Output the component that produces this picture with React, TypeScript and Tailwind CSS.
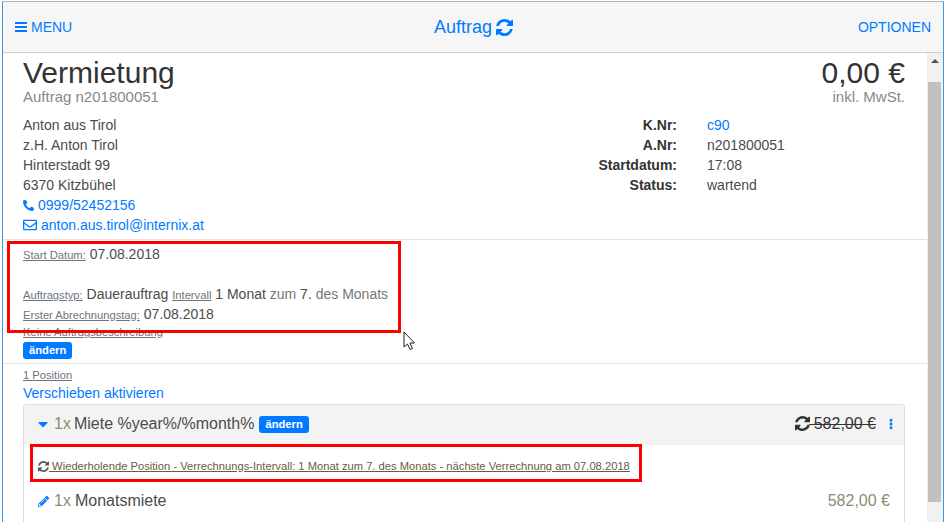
import { FaCaretDown, FaEllipsisV, FaPencilAlt, FaPhoneAlt, FaRegEnvelope } from 'react-icons/fa'

const infoRows = [
  { label: 'K.Nr:', value: 'c90', link: true },
  { label: 'A.Nr:', value: 'n201800051' },
  { label: 'Startdatum:', value: '17:08' },
  { label: 'Status:', value: 'wartend' },
]

function Small({ children }: { children: React.ReactNode }) {
  return <span className="text-[11.2px] text-[#6c757d] underline">{children}</span>
}

function Badge() {
  return (
    <span className="inline-block h-[17px] px-[6px] rounded-[3px] bg-[#007bff] text-white text-[11.2px] leading-[17px] font-bold">
      ändern
    </span>
  )
}

function Refresh({ size, className }: { size: number; className?: string }) {
  return (
    <svg width={size} height={size} viewBox="128 128 1536 1536" fill="currentColor" className={className}>
      <path d="M1639 1056q0 5-1 7-64 268-268 434.500t-478 166.500q-146 0-282.500-55t-243.500-157l-129 129q-19 19-45 19t-45-19-19-45v-448q0-26 19-45t45-19h448q26 0 45 19t19 45-19 45l-137 137q71 66 161 102t187 36q134 0 250-65t186-179q11-17 53-117 8-23 30-23h192q13 0 22.500 9.500t9.500 22.500zm25-800v448q0 26-19 45t-45 19h-448q-26 0-45-19t-19-45 19-45l138-138q-148-137-349-137-134 0-250 65t-186 179q-11 17-53 117-8 23-30 23h-199q-13 0-22.500-9.500t-9.500-22.500v-7q65-268 270-434.500t480-166.500q146 0 284 55.500t245 156.500l130-129q19-19 45-19t45 19 19 45z" />
    </svg>
  )
}

export default function App() {
  return (
    <div className="relative w-[944px] h-[522px] overflow-hidden bg-white pl-[2px] pt-[1px] text-[14px] leading-[20px] text-[#4c4c4c] font-['Liberation_Sans',Arial,sans-serif]">
      <div className="w-full h-full border-x-[1px] border-t-[1px] border-x-[#3b99e8] border-t-[#b5b5b5] flex flex-col">
        <div className="h-[51px] shrink-0 bg-[#f6f6f6] border-b border-[#cfcfcf] flex items-center justify-between px-[12px] text-[#007bff]">
          <div className="flex items-center gap-[4px]">
            <svg width="12" height="10" viewBox="0 0 12 10" fill="currentColor">
              <rect width="12" height="2" />
              <rect y="4" width="12" height="2" />
              <rect y="8" width="12" height="2" />
            </svg>
            MENU
          </div>
          <div className="flex items-center gap-[4px] text-[18px] ml-[17px]">
            Auftrag
            <Refresh size={17} />
          </div>
          <div>OPTIONEN</div>
        </div>
        <div className="flex-1 min-h-0 flex">
          <div className="flex-1 min-w-0 overflow-hidden">
            <div className="flex justify-between pl-[20px] pr-[22px] pt-[2px]">
              <div>
                <div className="text-[30px] leading-[36px] text-[#333]">Vermietung</div>
                <div className="text-[15px] text-[#888] leading-[16px] -mt-[2px]">Auftrag n201800051</div>
              </div>
              <div className="text-right">
                <div className="text-[30px] leading-[36px] text-[#333]">0,00 €</div>
                <div className="text-[15px] text-[#888] leading-[16px] -mt-[2px]">inkl. MwSt.</div>
              </div>
            </div>
            <div className="flex pl-[20px] pt-[10px] pb-[4px] border-b border-[#e2e2e2]">
              <div className="w-[500px]">
                <div>Anton aus Tirol</div>
                <div>z.H. Anton Tirol</div>
                <div>Hinterstadt 99</div>
                <div>6370 Kitzbühel</div>
                <div className="flex items-center gap-[4px] text-[#007bff]">
                  <FaPhoneAlt size={11} />
                  0999/52452156
                </div>
                <div className="flex items-center gap-[4px] text-[#007bff]">
                  <FaRegEnvelope size={14} />
                  anton.aus.tirol@internix.at
                </div>
              </div>
              <div className="flex flex-col">
                {infoRows.map((row) => (
                  <div key={row.label} className="flex">
                    <div className="w-[154px] text-right font-bold text-[#333]">{row.label}</div>
                    <div className={`ml-[30px] ${row.link ? 'text-[#007bff]' : ''}`}>{row.value}</div>
                  </div>
                ))}
              </div>
            </div>
            <div className="pl-[20px] pt-[4px] h-[124px] border-b border-[#e2e2e2]">
              <div>
                <Small>Start Datum:</Small> 07.08.2018
              </div>
              <div className="mt-[19px]">
                <Small>Auftragstyp:</Small> Dauerauftrag <Small>Intervall</Small> 1 Monat{' '}
                <span className="text-[#777]">zum</span> 7. <span className="text-[#777]">des Monats</span>
              </div>
              <div className="-mt-[1px]">
                <Small>Erster Abrechnungstag:</Small> 07.08.2018
              </div>
              <div className="leading-[15px] -mt-[1px]">
                <Small>Keine Auftragsbeschreibung</Small>
              </div>
              <div className="mt-[2px] flex">
                <Badge />
              </div>
            </div>
            <div className="pl-[20px] pr-[22px] pt-[2px]">
              <div className="leading-[16px]">
                <Small>1 Position</Small>
              </div>
              <div className="text-[#007bff]">Verschieben aktivieren</div>
              <div className="mt-[1px] border border-[#dedede] rounded-t-[3px] h-[200px]">
                <div className="h-[40px] bg-[#f3f3f3] flex items-center justify-between pl-[14px] pr-[11px] pb-[3px]">
                  <div className="flex items-center text-[16px]">
                    <FaCaretDown className="w-[10px] h-[16px] text-[#007bff] mr-[6px]" />
                    <span className="text-[#8c8c73] mr-[3px]">1x</span>
                    Miete %year%/%month%
                    <span className="ml-[5px] mt-[2px] flex">
                      <Badge />
                    </span>
                  </div>
                  <div className="flex items-center text-[16px] text-[#333]">
                    <Refresh size={15} />
                    <span className="line-through whitespace-pre -ml-[1px]"> 582,00 €</span>
                    <FaEllipsisV className="w-[4px] h-[12px] text-[#007bff] ml-[13px]" />
                  </div>
                </div>
                <div className="flex items-center pl-[14px] pt-[14px] text-[11.2px] leading-[15px] text-[#6b5b3e]">
                  <Refresh size={11} className="text-[#555]" />
                  <span className="underline whitespace-pre"> Wiederholende Position - Verrechnungs-Intervall: 1 Monat zum 7. des Monats - nächste Verrechnung am 07.08.2018</span>
                </div>
                <div className="flex items-center justify-between pl-[14px] pr-[14px] pt-[17px] text-[16px]">
                  <div className="flex items-center">
                    <FaPencilAlt size={11} className="text-[#007bff] mr-[5px]" />
                    <span className="text-[#8c8c73] mr-[4px]">1x</span>
                    Monatsmiete
                  </div>
                  <div className="text-[#8c8c73]">582,00 €</div>
                </div>
              </div>
            </div>
          </div>
          <div className="w-[16px] shrink-0 bg-[#f1f1f1] pl-[1px]">
            <div className="h-[29px] pt-[6px] flex justify-center pr-[1px]">
              <div className="w-0 h-0 border-x-[4px] border-x-transparent border-b-[4px] border-b-[#505050]" />
            </div>
            <div className="w-[13px] h-[420px] bg-[#c1c1c1]" />
          </div>
        </div>
      </div>
      <div className="absolute left-[7px] top-[241px] w-[394px] h-[92px] border-[3px] border-[#f00]" />
      <div className="absolute left-[30px] top-[444px] w-[612px] h-[38px] border-[3px] border-[#f00]" />
      <svg className="absolute left-[403px] top-[331px]" width="13" height="20" viewBox="0 0 13 20">
        <path d="M1 1 L1 16 L4.5 13 L7 18.5 L9.5 17.5 L7 12 L11.5 12 Z" fill="#fff" stroke="#222" strokeWidth="1" />
      </svg>
    </div>
  )
}
